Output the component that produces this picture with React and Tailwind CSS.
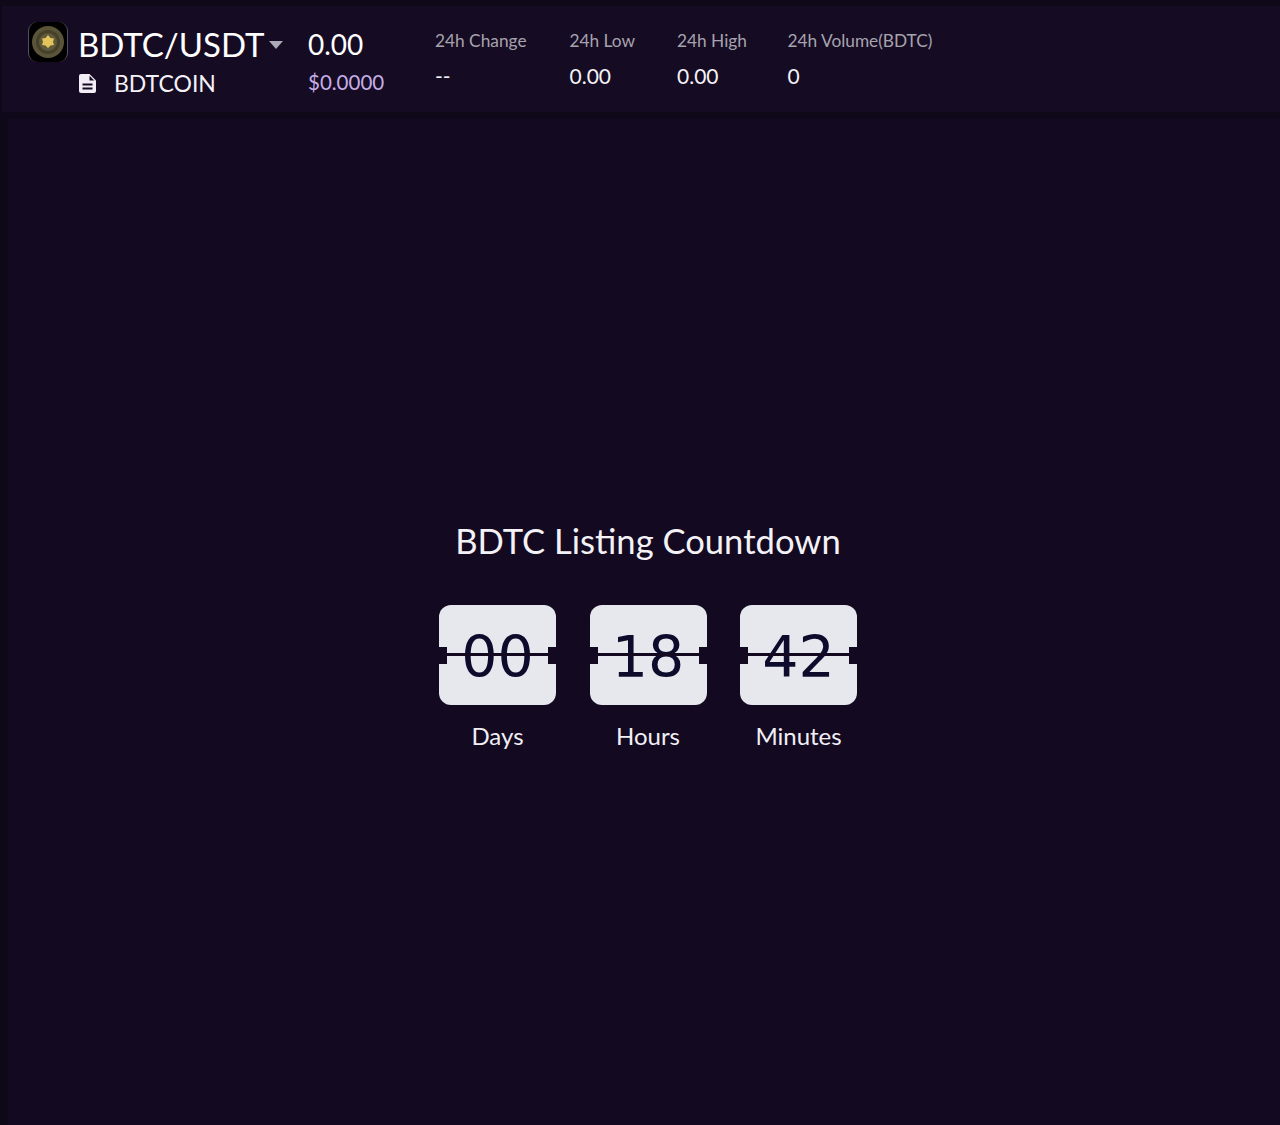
const stats = [
  { label: '24h Change', value: '--', width: 'w-[134.500px]' },
  { label: '24h Low', value: '0.00', width: 'w-[107.500px]' },
  { label: '24h High', value: '0.00', width: 'w-[110.500px]' },
  { label: '24h Volume(BDTC)', value: '0', width: '' },
];

const countdown = [
  { value: '00', label: 'Days' },
  { value: '18', label: 'Hours' },
  { value: '42', label: 'Minutes' },
];

function CoinLogo() {
  return (
    <div className="w-[40px] h-[40px] rounded-[9px] bg-black flex items-center justify-center shrink-0 border-x border-[#55505f]">
      <svg width="34" height="34" viewBox="0 0 34 34">
        <circle cx="17" cy="17" r="16" fill="#5a5539" />
        <circle cx="17" cy="17" r="12" fill="#454029" />
        <circle cx="17" cy="17" r="9" fill="#5f5a3c" />
        <path d="M17 10l2.500 3 3.500.5-1 3.500 1 3-3.500.5L17 23l-2.500-2.500-3.500-.5 1-3-1-3.500 3.500-.5z" fill="#e3c45a" />
      </svg>
    </div>
  );
}

function DocIcon() {
  return (
    <svg width="17" height="19" viewBox="0 0 17 19" fill="none">
      <path d="M2 0h8.500L17 6.500V17a2 2 0 0 1-2 2H2a2 2 0 0 1-2-2V2a2 2 0 0 1 2-2z" fill="#f1eff5" />
      <path d="M10.500 1.800v4.700h4.700z" fill="#150b23" />
      <path d="M3.500 10.500h10M3.500 14.500h10" stroke="#150b23" strokeWidth="2" />
    </svg>
  );
}

function FlipCard({ value, label }) {
  return (
    <div className="w-[117px] flex flex-col items-center">
      <div className="relative w-full h-[100px] rounded-[12px] bg-[#e6e8ee] flex items-center justify-center overflow-hidden">
        <span className="mt-[4px] text-[57px] leading-none text-[#0c0b2c] font-['DejaVu_Sans',sans-serif]">{value}</span>
        {/* notches and split line */}
        <div className="absolute left-0 top-[42px] w-[8px] h-[17px] bg-[#130a21]" />
        <div className="absolute right-0 top-[42px] w-[8px] h-[17px] bg-[#130a21]" />
        <div className="absolute left-[8px] right-[8px] top-[48px] h-[3px] bg-[#130a21]" />
      </div>
      <div className="mt-[17px] text-[24px] leading-[28px] text-[#f1eff5]">{label}</div>
    </div>
  );
}

export default function App() {
  return (
    <div className="w-[1280px] h-[1125px] overflow-hidden bg-[#0e0818] font-['Lato',sans-serif] flex flex-col pt-[6px]">
      {/* Header */}
      <div className="h-[106px] ml-[2px] bg-[#150b23] flex items-start pl-[26px] shrink-0">
        <div className="mt-[16px]">
          <CoinLogo />
        </div>
        <div className="ml-[10px] w-[230px] shrink-0">
          <div className="flex items-center h-[44px] mt-[16px]">
            <span className="text-[33px] leading-[44px] text-white">BDTC/USDT</span>
            <div className="ml-[5px] mt-[1px] w-0 h-0 border-x-[7.500px] border-x-transparent border-t-[8px] border-t-[#aaa9b5]" />
          </div>
          <div className="flex items-center h-[30px] mt-[2px] ml-[1px]">
            <DocIcon />
            <span className="ml-[18px] text-[23px] leading-[30px] text-[#f4f2f7]">BDTCOIN</span>
          </div>
        </div>
        <div className="w-[126px] shrink-0">
          <div className="mt-[18px] text-[28px] leading-[40px] text-white">0.00</div>
          <div className="mt-[3px] text-[20.500px] leading-[30px] text-[#c5aee6]">$0.0000</div>
        </div>
        <div className="flex mt-[24px] ml-[1px]">
          {stats.map((s) => (
            <div key={s.label} className={s.width}>
              <div className="text-[17.300px] leading-[22px] text-[#a7a3ae]">{s.label}</div>
              <div className="mt-[13px] text-[21px] leading-[22px] text-[#f4f2f7]">{s.value}</div>
            </div>
          ))}
        </div>
      </div>

      {/* Countdown panel */}
      <div className="flex-1 mt-[7px] ml-[8px] bg-[#130a21] flex flex-col items-center">
        <h1 className="mt-[399px] ml-[8px] text-[34.600px] leading-[46px] text-[#f4f2f7]">BDTC Listing Countdown</h1>
        <div className="mt-[41px] ml-[8px] flex gap-[33.500px]">
          {countdown.map((c) => (
            <FlipCard key={c.label} value={c.value} label={c.label} />
          ))}
        </div>
      </div>
    </div>
  );
}
